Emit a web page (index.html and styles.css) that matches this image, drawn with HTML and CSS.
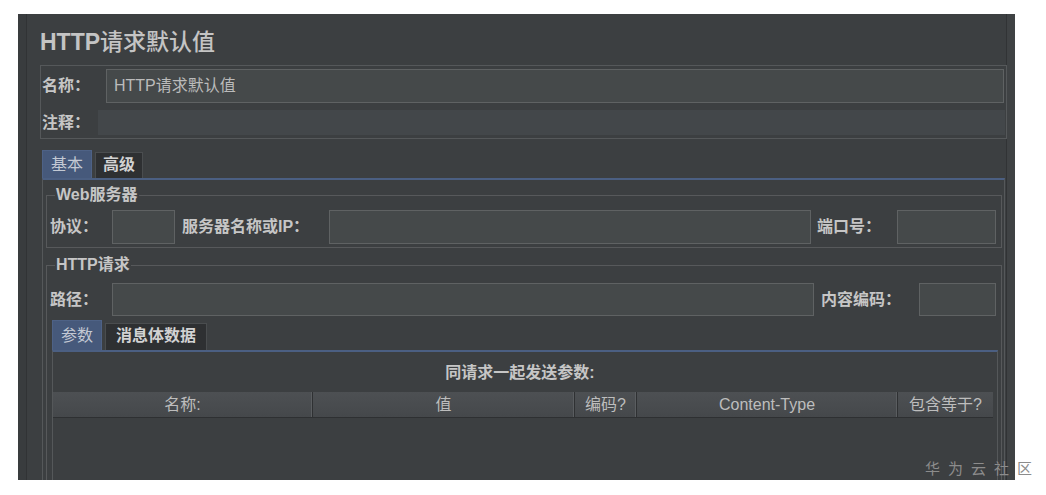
FILE: index.html
```html
<!DOCTYPE html>
<html lang="zh">
<head>
<meta charset="utf-8">
<title>HTTP请求默认值</title>
<link rel="stylesheet" href="styles.css">
</head>
<body>
<div class="window">
  <div class="title"><span class="title-latin">HTTP</span>请求默认值</div>
  <div class="namebox">
    <div class="row name-row">
      <span class="label name-label">名称：</span>
      <div class="field name-field">HTTP请求默认值</div>
    </div>
    <div class="row comment-row">
      <span class="label comment-label">注释：</span>
      <div class="comment-field"></div>
    </div>
  </div>
  <div class="tabs outer-tabs">
    <div class="tab active tab-basic">基本</div>
    <div class="tab tab-adv">高级</div>
  </div>
  <div class="tabpanel outer-panel">
    <fieldset class="group web-group">
      <legend>Web服务器</legend>
      <div class="frow">
        <span class="label w-proto">协议：</span>
        <div class="field f-proto"></div>
        <span class="label w-server">服务器名称或IP：</span>
        <div class="field f-grow"></div>
        <span class="label w-port">端口号：</span>
        <div class="field f-port"></div>
      </div>
    </fieldset>
    <fieldset class="group http-group">
      <legend>HTTP请求</legend>
      <div class="frow">
        <span class="label w-path">路径：</span>
        <div class="field f-grow"></div>
        <span class="label w-enc">内容编码：</span>
        <div class="field f-enc"></div>
      </div>
      <div class="tabs inner-tabs">
        <div class="tab active tab-params">参数</div>
        <div class="tab tab-body">消息体数据</div>
      </div>
      <div class="tabpanel inner-panel">
        <div class="caption">同请求一起发送参数:</div>
        <div class="thead">
          <div class="th">名称:</div>
          <div class="th">值</div>
          <div class="th">编码?</div>
          <div class="th">Content-Type</div>
          <div class="th">包含等于?</div>
        </div>
      </div>
    </fieldset>
  </div>
</div>
<div class="watermark">华为云社区</div>
</body>
</html>
```
FILE: styles.css
```css
* { box-sizing: border-box; }

body {
  margin: 0;
  background: #ffffff;
  font-family: "Liberation Sans", "Noto Sans CJK SC", sans-serif;
  color: #bbbbbb;
  position: relative;
}

.window {
  margin: 14px 0 0 18px;
  width: 997px;
  height: 466px;
  background: #3c3f41;
  border-left: 8px solid #393c3e;
  border-right: 8px solid #3f4244;
  padding: 14px 0 0 14px;
  overflow: hidden;
  box-shadow: inset 1px 0 0 #313335, inset -1px 0 0 #313335;
}

.title {
  height: 28px;
  font-size: 23px;
  line-height: 28px;
  font-weight: 500;
  color: #c4c4c4;
  white-space: nowrap;
}
.title-latin { font-weight: bold; }

.label {
  font-size: 16px;
  font-weight: bold;
  line-height: 18px;
  color: #c6c6c6;
  white-space: nowrap;
  flex: none;
}

.field {
  height: 34px;
  background: #45494a;
  border: 1px solid #5f6263;
  font-size: 16px;
  line-height: 32px;
  padding-left: 7px;
  color: #bbbbbb;
  flex: none;
}

.namebox {
  margin-top: 9px;
  height: 74px;
  border: 1px solid #55585a;
  padding: 3px 2px 0 1px;
}

.row { display: flex; align-items: center; }
.name-row { height: 34px; }
.name-label { width: 64px; }
.name-field { flex: 1; }
.comment-row { height: 25px; margin-top: 7px; }
.comment-label { width: 56px; }
.comment-field {
  flex: 1;
  height: 25px;
  background: #43474a;
  margin-right: -1px;
}

.tabs {
  display: flex;
  align-items: flex-end;
  height: 28px;
}
.outer-tabs { margin-top: 11px; padding-left: 2px; }
.inner-tabs { margin-top: 4px; height: 30px; padding-left: 2px; }

.tab {
  height: 26px;
  font-size: 16px;
  line-height: 24px;
  text-align: center;
  font-weight: bold;
  color: #d2d2d2;
  background: #2e3032;
  border: 1px solid #4a4d4f;
  border-bottom: none;
  flex: none;
}
.tab.active {
  height: 28px;
  line-height: 27px;
  background: #46597b;
  border-color: #4e6286;
  color: #c3c9d4;
  font-weight: normal;
}
.tab-basic { width: 50px; }
.tab-adv { width: 48px; margin-left: 3px; }
.inner-tabs .tab.active { height: 30px; line-height: 29px; }
.inner-tabs .tab { height: 27px; }
.tab-params { width: 50px; }
.tab-body { width: 102px; margin-left: 3px; }

.tabpanel {
  border-top: 2px solid #4b5f82;
  border-left: 1px solid #55585a;
  border-right: 1px solid #55585a;
}
.outer-panel {
  margin: 0 2px;
  height: 400px;
  padding: 0 2px 0 3px;
}

.group {
  margin: 0;
  min-width: 0;
  border: 1px solid #57595b;
}
.group legend {
  margin-left: 5px;
  padding: 0 1px;
  font-size: 16px;
  font-weight: bold;
  line-height: 18px;
  color: #c6c6c6;
}
.web-group { margin-top: 6px; padding: 6px 5px 3px 3px; }
.http-group { margin-top: 8px; padding: 9px 3px 0 3px; }

.frow {
  display: flex;
  align-items: center;
  height: 34px;
}
.w-proto { width: 62px; }
.f-proto { width: 63px; }
.w-server { width: 147px; margin-left: 7px; }
.f-grow { flex: 1; }
.w-port { width: 80px; margin-left: 6px; }
.f-port { width: 99px; }
.w-path { width: 62px; }
.w-enc { width: 98px; margin-left: 7px; }
.f-enc { width: 77px; }
.http-group .frow { margin-right: 2px; height: 33px; }
.http-group .frow .field { height: 33px; }

.inner-panel {
  margin-left: 2px;
  height: 220px;
}

.caption {
  margin-top: 11px;
  height: 20px;
  line-height: 20px;
  text-align: center;
  font-size: 16px;
  font-weight: bold;
  color: #c6c6c6;
  padding-right: 10px;
}

.thead {
  margin-top: 9px;
  display: grid;
  grid-template-columns: 260px 262px 62px 261px 95px;
  height: 26px;
  background: linear-gradient(#4d5053, #45484b);
  border-bottom: 1px solid #2e3032;
  width: 940px;
}
.th {
  font-size: 16px;
  line-height: 25px;
  text-align: center;
  color: #bdbdbd;
  white-space: nowrap;
  overflow: hidden;
  border-right: 1px solid #2f3133;
  box-shadow: inset -2px 0 0 -1px #5a5d60;
}
.th:last-child { border-right: none; box-shadow: none; }

.watermark {
  position: absolute;
  left: 925px;
  top: 458px;
  font-family: "Noto Sans CJK SC", sans-serif;
  font-size: 15px;
  line-height: 20px;
  letter-spacing: 8px;
  color: #8c8c8c;
  white-space: nowrap;
}
```
